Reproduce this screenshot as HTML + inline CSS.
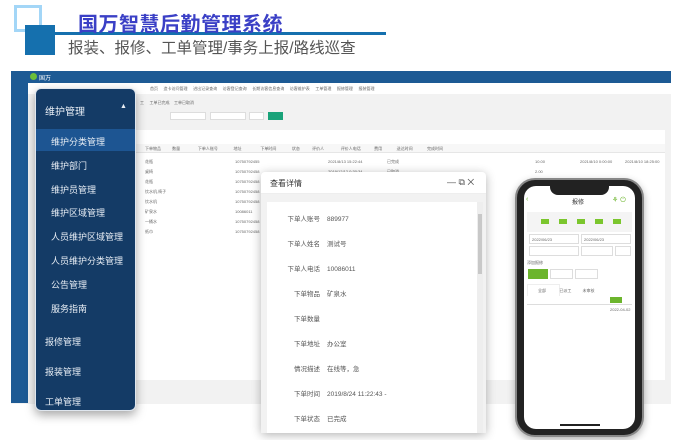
<!DOCTYPE html>
<html><head><meta charset="utf-8"><style>
*{margin:0;padding:0;box-sizing:border-box}
body{width:679px;height:440px;background:#fff;position:relative;overflow:hidden;font-family:"Liberation Sans","Noto Sans CJK SC",sans-serif}
.a{position:absolute}
.t{font-size:4px;color:#666;white-space:nowrap}
</style></head><body>
<div class="a" style="left:14px;top:5px;width:28px;height:27px;border:3px solid #a3d6f7"></div>
<div class="a" style="left:25px;top:25px;width:30px;height:30px;background:#1570ae"></div>
<div class="a" style="left:55px;top:32px;width:331px;height:3px;background:#1570ae"></div>
<div class="a" style="left:78px;top:8px;font-size:20px;font-weight:bold;color:#3b40c6;letter-spacing:0.5px">国万智慧后勤管理系统</div>
<div class="a" style="left:68px;top:36px;font-size:15.5px;color:#555">报装、报修、工单管理/事务上报/路线巡查</div>

<div class="a" style="left:11px;top:71px;width:660px;height:333px;background:#f2f2f2"></div>
<div class="a" style="left:11px;top:71px;width:660px;height:12px;background:#1d5a94"></div>
<div class="a" style="left:30px;top:73px;width:7px;height:7px;border-radius:50%;background:#6cbf3a"></div>
<div class="a t" style="left:39px;top:73px;color:#fff;font-size:6px">国万</div>
<div class="a" style="left:11px;top:83px;width:17px;height:320px;background:#1d5a94"></div>
<div class="a" style="left:28px;top:83px;width:643px;height:11px;background:#fff"></div>
<div class="a t" style="left:150px;top:86px">首页 &nbsp;&nbsp;&nbsp; 造卡访问管理 &nbsp;&nbsp;&nbsp; 进出记录查询 &nbsp;&nbsp;&nbsp; 访客登记查询 &nbsp;&nbsp;&nbsp; 长期访客信息查询 &nbsp;&nbsp;&nbsp; 访客维护表 &nbsp;&nbsp;&nbsp; 工单管理 &nbsp;&nbsp;&nbsp; 报修管理 &nbsp;&nbsp;&nbsp; 报装管理</div>
<div class="a t" style="left:140px;top:100px">工 &nbsp;&nbsp;&nbsp; 工单已完成 &nbsp;&nbsp; 工单已取消</div>
<div class="a" style="left:170px;top:112px;width:36px;height:8px;background:#fff;border:1px solid #ddd"></div>
<div class="a" style="left:210px;top:112px;width:36px;height:8px;background:#fff;border:1px solid #ddd"></div>
<div class="a" style="left:249px;top:112px;width:15px;height:8px;background:#fff;border:1px solid #ddd"></div>
<div class="a" style="left:268px;top:112px;width:15px;height:8px;background:#1aa37a"></div>
<div class="a" style="left:135px;top:130px;width:530px;height:250px;background:#fff"></div>
<div class="a" style="left:135px;top:144px;width:530px;height:9px;background:#f7f7f7;border-bottom:1px solid #e6e6e6"></div>
<div class="a t" style="left:145px;top:146px">下单物品 &nbsp;&nbsp;&nbsp;&nbsp;&nbsp;&nbsp;&nbsp;&nbsp; 数量 &nbsp;&nbsp;&nbsp;&nbsp;&nbsp;&nbsp;&nbsp;&nbsp;&nbsp;&nbsp;&nbsp;&nbsp;&nbsp;&nbsp; 下单人账号 &nbsp;&nbsp;&nbsp;&nbsp;&nbsp;&nbsp;&nbsp;&nbsp;&nbsp;&nbsp;&nbsp;&nbsp; 地址 &nbsp;&nbsp;&nbsp;&nbsp;&nbsp;&nbsp;&nbsp;&nbsp;&nbsp;&nbsp;&nbsp;&nbsp;&nbsp;&nbsp;&nbsp; 下单时间 &nbsp;&nbsp;&nbsp;&nbsp;&nbsp;&nbsp;&nbsp;&nbsp;&nbsp;&nbsp;&nbsp;&nbsp; 状态 &nbsp;&nbsp;&nbsp;&nbsp;&nbsp;&nbsp;&nbsp;&nbsp;&nbsp; 评价人 &nbsp;&nbsp;&nbsp;&nbsp;&nbsp;&nbsp;&nbsp;&nbsp;&nbsp;&nbsp;&nbsp;&nbsp;&nbsp; 评价人电话 &nbsp;&nbsp;&nbsp;&nbsp;&nbsp;&nbsp;&nbsp;&nbsp;&nbsp;&nbsp; 费用 &nbsp;&nbsp;&nbsp;&nbsp;&nbsp;&nbsp;&nbsp;&nbsp;&nbsp;&nbsp;&nbsp; 送达时间 &nbsp;&nbsp;&nbsp;&nbsp;&nbsp;&nbsp;&nbsp;&nbsp;&nbsp;&nbsp;&nbsp; 完成时间</div>
<div class="a t" style="left:145px;top:157px;line-height:10px">花瓶<br>桌椅<br>花瓶<br>饮水机,椅子<br>饮水机<br>矿泉水<br>一桶水<br>纸巾</div>
<div class="a t" style="left:235px;top:157px;line-height:10px">10750792455<br>10750792458<br>10750792458<br>10750792458<br>10750792458<br>10086011<br>10750792458<br>10750792458</div>
<div class="a t" style="left:328px;top:157px;line-height:10px">2021/8/13 15:22:44<br>2019/12/12 0:30:34</div>
<div class="a t" style="left:387px;top:157px;line-height:10px">已完成<br>已取消</div>
<div class="a t" style="left:535px;top:157px;line-height:10px">10.00<br>2.00</div>
<div class="a t" style="left:580px;top:157px;line-height:10px">2021/8/10 0:00:00</div>
<div class="a t" style="left:625px;top:157px;line-height:10px">2021/8/10 18:25:00</div>

<div class="a" style="left:35px;top:88px;width:101px;height:323px;background:#143b66;border:1px solid #dfe6ee;border-radius:6px;box-shadow:0 4px 10px rgba(0,0,0,.35);color:#e8eef5;font-size:9px">
<div class="a" style="left:9px;top:14px;font-size:10px">维护管理</div>
<div class="a" style="left:84px;top:14px;font-size:7px">▲</div>
<div class="a" style="left:0;top:40px;width:99px;height:22px;background:#1d5592"></div>
<div class="a" style="left:15px;top:46px">维护分类管理</div>
<div class="a" style="left:15px;top:70px">维护部门</div>
<div class="a" style="left:15px;top:94px">维护员管理</div>
<div class="a" style="left:15px;top:117px">维护区域管理</div>
<div class="a" style="left:15px;top:141px">人员维护区域管理</div>
<div class="a" style="left:15px;top:165px">人员维护分类管理</div>
<div class="a" style="left:15px;top:189px">公告管理</div>
<div class="a" style="left:15px;top:213px">服务指南</div>
<div class="a" style="left:9px;top:246px">报修管理</div>
<div class="a" style="left:9px;top:276px">报装管理</div>
<div class="a" style="left:9px;top:306px">工单管理</div>
</div>

<div class="a" style="left:261px;top:172px;width:225px;height:261px;background:#fff;border-radius:4px;box-shadow:0 2px 10px rgba(0,0,0,.3)">
<div class="a" style="left:0;top:0;width:225px;height:22px;border-bottom:1px solid #eee"></div>
<div class="a" style="left:9px;top:6px;font-size:8px;color:#333">查看详情</div>
<div class="a" style="left:186px;top:5px;font-size:9px;color:#555">— ⧉ ✕</div>
<div class="a" style="left:0;top:22px;width:225px;height:239px;background:#f2f2f2"></div>
<div class="a" style="left:6px;top:30px;width:210px;height:231px;background:#fff"></div>
<div class="a" style="left:216px;top:30px;width:6px;height:231px;background:#eee"></div>
<div class="a" style="left:217px;top:42px;width:4px;height:60px;background:#c8c8c8"></div>
<div class="a" style="top:35px;left:0;width:225px;font-size:6.5px;color:#555;line-height:25px">
<div style="display:flex"><span style="width:59px;text-align:right;margin-right:7px">下单人账号</span>889977</div>
<div style="display:flex"><span style="width:59px;text-align:right;margin-right:7px">下单人姓名</span>测试号</div>
<div style="display:flex"><span style="width:59px;text-align:right;margin-right:7px">下单人电话</span>10086011</div>
<div style="display:flex"><span style="width:59px;text-align:right;margin-right:7px">下单物品</span>矿泉水</div>
<div style="display:flex"><span style="width:59px;text-align:right;margin-right:7px">下单数量</span></div>
<div style="display:flex"><span style="width:59px;text-align:right;margin-right:7px">下单地址</span>办公室</div>
<div style="display:flex"><span style="width:59px;text-align:right;margin-right:7px">情况描述</span>在线等，急</div>
<div style="display:flex"><span style="width:59px;text-align:right;margin-right:7px">下单时间</span>2019/8/24 11:22:43 -</div>
<div style="display:flex"><span style="width:59px;text-align:right;margin-right:7px">下单状态</span>已完成</div>
</div>
</div>

<div class="a" style="left:515px;top:178px;width:129px;height:259px;background:#222;border-radius:20px;border:2px solid #888;box-shadow:0 3px 8px rgba(0,0,0,.3)"></div>
<div class="a" style="left:524px;top:186px;width:111px;height:243px;background:#fff;border-radius:12px;overflow:hidden">
<div class="a" style="left:26px;top:0;width:59px;height:9px;background:#222;border-radius:0 0 8px 8px"></div>
<div class="a t" style="left:2px;top:10px;color:#6cb52d;font-size:7px">‹</div>
<div class="a t" style="left:48px;top:11px;font-size:6px;color:#333">报修</div>
<div class="a t" style="left:88px;top:10px;font-size:7px;color:#6cb52d">⚘ ⏻</div>
<div class="a" style="left:3px;top:26px;width:105px;height:20px;background:#f4f4f4"></div>
<div class="a" style="left:17px;top:33px;width:80px;height:5px;display:flex;justify-content:space-between"><i style="width:8px;background:#7bc62d"></i><i style="width:8px;background:#7bc62d"></i><i style="width:8px;background:#7bc62d"></i><i style="width:8px;background:#7bc62d"></i><i style="width:8px;background:#7bc62d"></i></div>
<div class="a" style="left:5px;top:48px;width:50px;height:10px;border:1px solid #ddd"></div>
<div class="a" style="left:57px;top:48px;width:50px;height:10px;border:1px solid #ddd"></div>
<div class="a t" style="left:8px;top:51px;font-size:4px">2022/06/23</div>
<div class="a t" style="left:60px;top:51px;font-size:4px">2022/06/23</div>
<div class="a" style="left:5px;top:60px;width:50px;height:10px;border:1px solid #ddd"></div>
<div class="a" style="left:57px;top:60px;width:32px;height:10px;border:1px solid #ddd"></div>
<div class="a" style="left:91px;top:60px;width:16px;height:10px;border:1px solid #ddd"></div>
<div class="a t" style="left:3px;top:74px">添加报修</div>
<div class="a" style="left:4px;top:83px;width:20px;height:10px;background:#6cb52d"></div>
<div class="a" style="left:26px;top:83px;width:23px;height:10px;border:1px solid #ddd"></div>
<div class="a" style="left:51px;top:83px;width:23px;height:10px;border:1px solid #ddd"></div>
<div class="a" style="left:3px;top:98px;width:33px;height:12px;border:1px solid #eee;border-bottom:none"></div>
<div class="a t" style="left:14px;top:102px">全部 &nbsp;&nbsp;&nbsp;&nbsp;&nbsp;&nbsp;&nbsp;&nbsp;&nbsp;&nbsp; 已派工 &nbsp;&nbsp;&nbsp;&nbsp;&nbsp;&nbsp;&nbsp;&nbsp; 未审核</div>
<div class="a" style="left:86px;top:111px;width:12px;height:6px;background:#6cb52d"></div>
<div class="a" style="left:3px;top:118px;width:105px;height:1px;background:#ddd"></div>
<div class="a t" style="left:86px;top:121px">2022-04-02</div>
<div class="a" style="left:36px;top:238px;width:40px;height:1.5px;background:#222"></div>
</div>
</body></html>
